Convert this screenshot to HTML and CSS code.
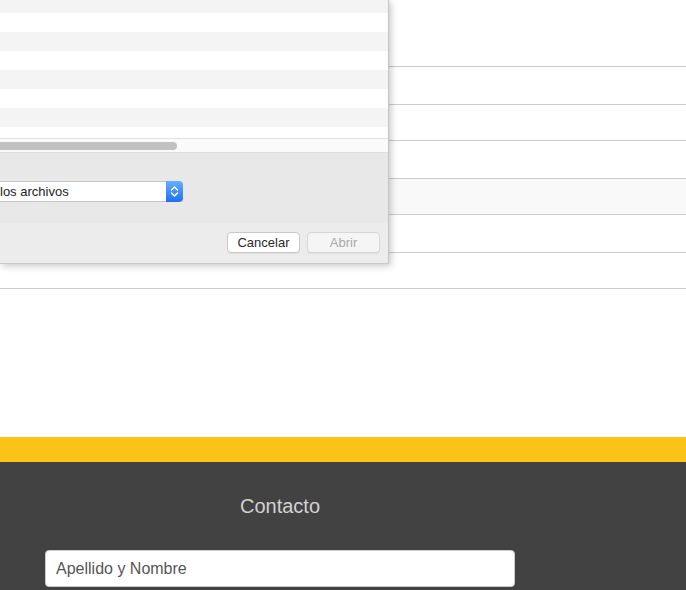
FILE: index.html
```html
<!DOCTYPE html>
<html lang="es">
<head>
<meta charset="utf-8">
<title>Contacto</title>
<link rel="stylesheet" href="styles.css">
</head>
<body>
<main class="page">
  <section class="table-area">
    <div class="row row-top"></div>
    <div class="row row-a"></div>
    <div class="row row-b"></div>
    <div class="row row-a"></div>
    <div class="row row-b row-shaded"></div>
    <div class="row row-a"></div>
    <div class="row row-b"></div>

    <div class="dialog">
      <div class="file-list"></div>
      <div class="scroll-track"><div class="scroll-thumb"></div></div>
      <div class="options">
        <div class="popup">
          <span class="popup-label">los archivos</span>
          <span class="popup-stepper">
            <svg width="9" height="13" viewBox="0 0 9 13"><path d="M1.5 5 L4.5 2 L7.5 5 M1.5 8 L4.5 11 L7.5 8" fill="none" stroke="#fff" stroke-width="1.4" stroke-linecap="round" stroke-linejoin="round"/></svg>
          </span>
        </div>
      </div>
      <div class="actions">
        <button class="btn">Cancelar</button>
        <button class="btn btn-disabled">Abrir</button>
      </div>
    </div>
  </section>

  <div class="spacer"></div>
  <div class="accent"></div>

  <footer class="contact">
    <div class="contact-inner">
      <h2 class="contact-title">Contacto</h2>
      <input class="field" type="text" placeholder="Apellido y Nombre">
    </div>
  </footer>
</main>
</body>
</html>
```
FILE: styles.css
```css
* { box-sizing: border-box; }
html, body { margin: 0; padding: 0; }
body {
  width: 686px;
  height: 590px;
  overflow: hidden;
  background: #fff;
  font-family: "Liberation Sans", Arial, sans-serif;
}
.page { display: flex; flex-direction: column; }

.table-area { position: relative; }
.row { border-bottom: 1px solid #cbcbcb; }
.row-top { height: 67px; }
.row-a { height: 38px; }
.row-b { height: 36px; }
.row-shaded { background: #f9f9f9; }

.dialog {
  position: absolute;
  left: 0;
  top: 0;
  width: 389px;
  height: 264px;
  display: flex;
  flex-direction: column;
  background: #ececec;
  border-right: 1px solid #c4c4c4;
  border-bottom: 1px solid #c8c8c8;
  box-shadow: 2px 2px 7px rgba(0,0,0,0.22);
}
.file-list {
  height: 139px;
  background-image: linear-gradient(to bottom, #f4f4f4 0 19px, #ffffff 19px 38px);
  background-size: 100% 38px;
  background-repeat: repeat-y;
  background-position: 0 -6px;
  border-bottom: 1px solid #e2e2e2;
}
.scroll-track {
  height: 14px;
  background: #fafafa;
  padding-top: 3px;
  border-bottom: 1px solid #e0e0e0;
}
.scroll-thumb {
  width: 177px;
  height: 8px;
  background: #c1c1c1;
  border-radius: 0 4px 4px 0;
}
.options {
  height: 70px;
  background: #e8e8e8;
  padding-top: 28px;
}
.popup {
  display: flex;
  width: 183px;
  height: 21px;
}
.popup-label {
  flex: 1;
  background: #fff;
  border: 1px solid #c6c6c6;
  border-left: none;
  border-right: none;
  font-size: 13px;
  line-height: 19px;
  color: #222;
}
.popup-stepper {
  width: 17px;
  display: flex;
  align-items: center;
  justify-content: center;
  background: linear-gradient(#69aefc, #1f6ff4);
  border-radius: 0 4px 4px 0;
}
.actions {
  flex: 1;
  display: flex;
  justify-content: flex-end;
  gap: 7px;
  padding: 9px 8px 0 0;
}
.btn {
  width: 73px;
  height: 21px;
  border: 1px solid #c9c9c9;
  border-radius: 4px;
  background: #fff;
  font-family: "Liberation Sans", Arial, sans-serif;
  font-size: 13px;
  line-height: 20px;
  color: #2a2a2a;
  padding: 0;
  box-shadow: 0 1px 0 rgba(0,0,0,0.05);
}
.btn-disabled {
  background: #f5f5f5;
  border-color: #d6d6d6;
  color: #a9a9a9;
}

.spacer { height: 148px; }
.accent { height: 25px; background: #fbc318; }

.contact {
  height: 128px;
  background: #424242;
}
.contact-inner {
  width: 470px;
  margin-left: 45px;
  display: flex;
  flex-direction: column;
}
.contact-title {
  margin: 32px 0 0;
  text-align: center;
  font-size: 20px;
  font-weight: normal;
  line-height: 24px;
  color: #d2d2d2;
}
.field {
  margin-top: 32px;
  height: 37px;
  width: 470px;
  border: 1px solid #ccc;
  border-radius: 4px;
  background: #fff;
  padding: 0 10px;
  font-family: "Liberation Sans", Arial, sans-serif;
  font-size: 16px;
  color: #555;
}
.field::placeholder { color: #555; }
```
